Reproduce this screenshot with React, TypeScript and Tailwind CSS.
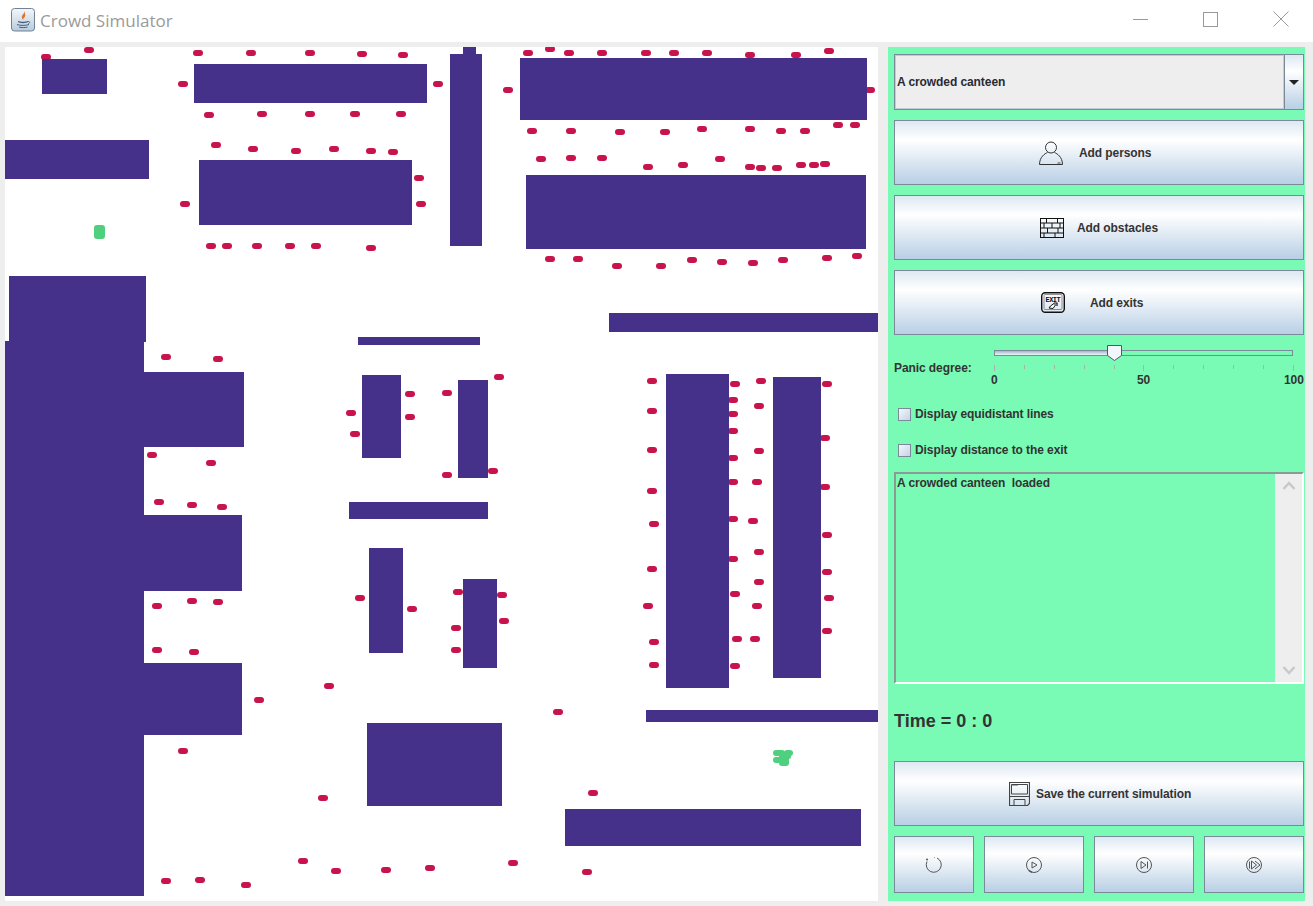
import type { ReactNode } from "react";

const obstacles = [
  [42, 59, 65, 35], [194, 64, 233, 39], [450, 54, 32, 192], [463, 47, 13, 7],
  [520, 58, 347, 62], [5, 140, 144, 39], [199, 160, 213, 65], [526, 175, 340, 74],
  [9, 276, 137, 66], [5, 341, 139, 555], [144, 372, 100, 75], [144, 515, 98, 76],
  [144, 663, 98, 72], [358, 337, 122, 8], [609, 313, 269, 19], [362, 375, 39, 83],
  [458, 380, 30, 98], [349, 502, 139, 17], [369, 548, 34, 105], [463, 579, 34, 89],
  [666, 374, 63, 314], [773, 377, 48, 301], [646, 710, 232, 12], [367, 723, 135, 83],
  [565, 809, 296, 37],
];

// centre of each person on the map
const persons = [
  [46, 57], [89, 50], [198, 53], [251, 53], [310, 53], [362, 54], [403, 55], [183, 84], [209, 115],
  [262, 114], [310, 114], [355, 114], [401, 114], [438, 84], [528, 53], [550, 49], [569, 53], [602, 53],
  [646, 53], [674, 53], [707, 53], [750, 55], [796, 55], [829, 51], [508, 90], [870, 90], [532, 131],
  [571, 131], [620, 132], [665, 132], [702, 129], [750, 129], [781, 131], [805, 131], [838, 125], [855, 125],
  [541, 159], [571, 158], [602, 158], [648, 167], [683, 165], [720, 159], [750, 167], [761, 168], [777, 168],
  [801, 165], [814, 165], [825, 164], [216, 145], [253, 149], [296, 151], [334, 149], [371, 151], [393, 152],
  [419, 178], [421, 204], [185, 204], [211, 246], [227, 246], [257, 246], [290, 246], [316, 246], [371, 248],
  [550, 259], [578, 259], [617, 266], [661, 266], [692, 260], [722, 262], [753, 263], [783, 260], [827, 258],
  [857, 256], [166, 357], [218, 359], [152, 455], [211, 463], [159, 502], [192, 505], [222, 507], [157, 606],
  [192, 601], [218, 602], [157, 650], [194, 652], [259, 700], [329, 686], [183, 751], [323, 798], [166, 881],
  [200, 880], [246, 885], [303, 861], [336, 871], [386, 870], [430, 868], [513, 863], [587, 872], [558, 712],
  [593, 793], [351, 413], [355, 434], [410, 394], [410, 417], [447, 393], [499, 377], [447, 475], [493, 471],
  [360, 598], [412, 609], [458, 592], [456, 628], [456, 650], [502, 595], [504, 621], [652, 381], [652, 411],
  [652, 450], [652, 491], [654, 524], [652, 569], [648, 606], [654, 642], [654, 665], [735, 384], [733, 400],
  [733, 414], [733, 431], [733, 458], [733, 482], [733, 519], [733, 559], [735, 594], [737, 639], [735, 666],
  [761, 381], [759, 406], [759, 451], [757, 482], [753, 521], [759, 552], [759, 582], [757, 606], [755, 639],
  [827, 384], [825, 438], [825, 487], [827, 535], [827, 572], [829, 598], [827, 631],
];

// exits, drawn as green blobs
const exits = [
  [94, 225, 11, 14], [773, 750, 12, 6], [784, 750, 9, 6], [786, 754, 5, 5], [773, 757, 9, 6], [779, 752, 10, 14],
];

const metal = "bg-[linear-gradient(to_bottom,#dde8f3_0%,#ffffff_30%,#b8cfe5_100%)] border border-[#7a8a99]";

function JavaIcon() {
  return (
    <svg width="25" height="24" viewBox="0 0 25 24">
      <defs>
        <linearGradient id="jv" x1="0" y1="0" x2="0" y2="1">
          <stop offset="0" stopColor="#f4f7fa" />
          <stop offset="1" stopColor="#b9cbdc" />
        </linearGradient>
      </defs>
      <rect x="0.5" y="0.5" width="23" height="22.5" rx="3" fill="url(#jv)" stroke="#6f8296" />
      <path d="M13 3c1 3-3 4-2 7 .3 1 1 1.500 1.500 2-1-2 3-3.500 1.500-6 0-1-.5-2-1-3z" fill="#e2722a" />
      <path d="M7 13c2 1 8 1 10 0v1c-1 1.500-9 1.500-10 0z" fill="#43617f" />
      <path d="M6 16.500c3 1.200 9 1.200 12 0M8 19c2.500.8 6 .8 8.500 0" fill="none" stroke="#43617f" strokeWidth="1" />
      <path d="M17 13.500c2-.5 2.500 1.500 0 2.500" fill="none" stroke="#43617f" strokeWidth="0.8" />
    </svg>
  );
}

function PersonIcon() {
  return (
    <svg width="24" height="24" viewBox="0 0 24 24" fill="none" stroke="#333" strokeWidth="1">
      <circle cx="12" cy="6.500" r="5.500" />
      <path d="M0.500 23.500C0.500 16 6 12.500 8.500 11.500M15.500 11.500C18 12.500 23.500 16 23.500 23.500H0.500" />
      <path d="M18.500 22h3" stroke="#999" strokeWidth="2" />
    </svg>
  );
}

function BrickIcon() {
  return (
    <svg width="24" height="20" viewBox="0 0 24 20" fill="none" stroke="#111" strokeWidth="1">
      <rect x="0.500" y="0.500" width="23" height="19" />
      <path d="M0 5h24M0 10h24M0 15h24M6.500 0v5M17.500 0v5M4 5v5M12 5v5M20 5v5M7.500 10v5M18 10v5M4 15v5M15 15v5" />
    </svg>
  );
}

function ExitIcon() {
  return (
    <svg width="24" height="21" viewBox="0 0 24 21" fill="none" stroke="#111">
      <rect x="0.700" y="0.700" width="22.600" height="19.600" rx="3.500" strokeWidth="1.400" />
      <rect x="3" y="2.500" width="18" height="15" rx="1" stroke="#777" strokeWidth="0.800" />
      <text x="12" y="9.500" textAnchor="middle" fontSize="7" fontWeight="700" fill="#111" stroke="none" fontFamily="Liberation Mono, monospace" textLength="15">EXIT</text>
      <path d="M8 16l1.500-2 3.500-2.500 1.500 1.500-2.500 3.500z" strokeWidth="1" fill="#fff" />
      <path d="M13 11h3v3" strokeWidth="1.200" />
    </svg>
  );
}

function SaveIcon() {
  return (
    <svg width="21" height="24" viewBox="0 0 21 24" fill="none" stroke="#444">
      <path d="M0.500 0.500h20v21l-2 2h-18z" strokeWidth="1.200" />
      <path d="M2.500 2.500h16v9.500h-16z" />
      <path d="M3 3.500h6" stroke="#aaa" />
      <path d="M0.500 14.500h20M5 23.500v-6h11v6" />
    </svg>
  );
}

function ReloadIcon() {
  return (
    <svg width="18" height="18" viewBox="0 0 18 18" fill="none" stroke="#555">
      <path d="M2 5.500A7.500 7.500 0 1 0 12 2M9 1.500h.5" />
      <circle cx="2" cy="3.500" r="1" fill="#555" stroke="none" />
    </svg>
  );
}

function PlayIcon() {
  return (
    <svg width="18" height="18" viewBox="0 0 18 18" fill="none" stroke="#555">
      <circle cx="9" cy="9" r="7.500" />
      <path d="M3.700 14.300a7.500 7.500 0 0 0 3.300 2" strokeWidth="1.500" />
      <path d="M7 6l5 3-5 3z" />
    </svg>
  );
}

function StepIcon() {
  return (
    <svg width="18" height="18" viewBox="0 0 18 18" fill="none" stroke="#555">
      <circle cx="9" cy="9" r="7.500" />
      <path d="M6 5.500l5 3.500-5 3.500zM12.500 5.500v7" />
    </svg>
  );
}

function FastIcon() {
  return (
    <svg width="18" height="18" viewBox="0 0 18 18" fill="none" stroke="#555">
      <circle cx="9" cy="9" r="7.500" />
      <path d="M4.500 5.500v7M6.500 5v8l5-4zM10 5l5 4-5 4" />
    </svg>
  );
}

function MetalButton({ pad, gap, icon, label }: { pad: string; gap: string; icon: ReactNode; label: string }) {
  return (
    <div className={`${metal} h-[65px] flex items-center ${pad} ${gap}`}>
      {icon}
      <span>{label}</span>
    </div>
  );
}

function SmallButton({ width, children }: { width: string; children: ReactNode }) {
  return <div className={`${metal} ${width} h-[57px] flex items-center justify-center`}>{children}</div>;
}

function Check({ label }: { label: string }) {
  return (
    <div className="flex items-center gap-1 pl-1 h-[14px]">
      <div className="w-[13px] h-[13px] border border-[#7a8a99] bg-[linear-gradient(135deg,#f4f7fb,#c4d4e6)]" />
      <span>{label}</span>
    </div>
  );
}

function Slider() {
  return (
    <div className="relative w-[300px] h-[43px]">
      <div className="mt-[5px] h-[6px] w-[299px] border border-[#7a8a99] flex">
        <div className="w-[113px] bg-[linear-gradient(to_bottom,#a3b8cc,#eef3f9)]" />
      </div>
      <svg className="absolute left-[113px] top-0" width="15" height="16" viewBox="0 0 15 16">
        <path d="M0.500 0.500h14v10l-7 5-7-5z" fill="#f3f7fb" stroke="#556" />
      </svg>
      <div className="mt-[9px] flex justify-between items-start w-[300px]">
        {Array.from({ length: 11 }).map((_, i) => (
          <div key={i} className={`w-px bg-[#a8b3ad] ${i % 5 === 0 ? "h-[6px]" : "h-[4px]"}`} />
        ))}
      </div>
      <div className="absolute left-[-3px] top-[29px] flex">
        <span className="w-[146px]">0</span>
        <span className="w-[147px]">50</span>
        <span>100</span>
      </div>
    </div>
  );
}

export default function App() {
  return (
    <div className="w-[1313px] h-[906px] bg-[#eeeeee] overflow-hidden font-['Liberation_Sans',Arial,sans-serif]">
      <div className="h-[42px] bg-white flex items-center justify-between">
        <div className="flex items-center gap-[4px] pl-[11px] pb-[2px]">
          <JavaIcon />
          <span className="text-[17px] text-[#9a9a9a] font-['Open_Sans',sans-serif] leading-none">Crowd Simulator</span>
        </div>
        <div className="flex items-center pr-[24px] gap-[55px] pb-[4px]">
          <div className="w-[15px] h-px bg-[#999]" />
          <div className="w-[15px] h-[15px] border border-[#999]" />
          <svg width="16" height="16" viewBox="0 0 16 16" stroke="#999" fill="none">
            <path d="M0.500 0.500l15 15M15.500 0.500l-15 15" />
          </svg>
        </div>
      </div>

      <div className="flex gap-[10px] pt-[5px] pl-[5px]">
        <div className="relative w-[873px] h-[854px] bg-white overflow-hidden">
          {persons.map(([x, y], i) => (
            <div
              key={i}
              className="absolute w-[10px] h-[6px] rounded-[3px] bg-[#c8134c]"
              style={{ left: x - 10, top: y - 50 }}
            />
          ))}
          {obstacles.map(([x, y, w, h], i) => (
            <div key={i} className="absolute bg-[#45308a]" style={{ left: x - 5, top: y - 47, width: w, height: h }} />
          ))}
          {exits.map(([x, y, w, h], i) => (
            <div
              key={i}
              className="absolute rounded-[3px] bg-[#4fd07f]"
              style={{ left: x - 5, top: y - 47, width: w, height: h }}
            />
          ))}
        </div>

        <div className="w-[417px] h-[854px] bg-[#7afbb5] pt-[7px] pl-[6px] pr-[1px] text-[12px] font-bold text-[#333333] leading-none tracking-[-0.08px] flex flex-col">
          <div className="h-[56px] border border-[#7a8a99] flex">
            <div className="flex-1 border border-[#c2ccd6] bg-[#eeeeee] flex items-center pl-[1px] text-[#2a2a33]">
              A crowded canteen
            </div>
            <div className="w-[19px] bg-[linear-gradient(to_bottom,#dde8f3_0%,#ffffff_30%,#b8cfe5_100%)] border-l border-[#7a8a99] flex items-center justify-center">
              <div className="w-0 h-0 border-l-[5px] border-r-[5px] border-t-[5px] border-l-transparent border-r-transparent border-t-[#222]" />
            </div>
          </div>

          <div className="mt-[10px] flex flex-col gap-[10px]">
            <MetalButton pad="pl-[144px]" gap="gap-[16px]" icon={<PersonIcon />} label="Add persons" />
            <MetalButton pad="pl-[145px]" gap="gap-[13px]" icon={<BrickIcon />} label="Add obstacles" />
            <MetalButton pad="pl-[146px]" gap="gap-[25px]" icon={<ExitIcon />} label="Add exits" />
          </div>

          <div className="mt-[10px] flex">
            <div className="w-[100px] pt-[17px]">Panic degree:</div>
            <Slider />
          </div>

          <div className="mt-[19px] flex flex-col gap-[22px]">
            <Check label="Display equidistant lines" />
            <Check label="Display distance to the exit" />
          </div>

          <div className="mt-[15px] h-[212px] border-2 border-t-[#8a9a94] border-l-[#8a9a94] border-r-white border-b-white flex">
            <div className="flex-1 pl-[1px] pt-[3px] whitespace-pre">A crowded canteen  loaded</div>
            <div className="w-[27px] bg-[#eeeeee] flex flex-col justify-between items-center py-[7px]">
              <svg width="14" height="10" viewBox="0 0 14 10" fill="none" stroke="#c8c8c8" strokeWidth="2.500">
                <path d="M1.500 8l5.500-6 5.500 6" />
              </svg>
              <svg width="14" height="10" viewBox="0 0 14 10" fill="none" stroke="#c8c8c8" strokeWidth="2.500">
                <path d="M1.500 2l5.500 6 5.500-6" />
              </svg>
            </div>
          </div>

          <div className="h-[77px] flex items-center text-[18px] pb-[3px] tracking-normal">Time = 0 : 0</div>

          <MetalButton pad="pl-[114px]" gap="gap-[6px]" icon={<SaveIcon />} label="Save the current simulation" />

          <div className="mt-[10px] flex gap-[10px]">
            <SmallButton width="w-[80px]"><ReloadIcon /></SmallButton>
            <SmallButton width="w-[100px]"><PlayIcon /></SmallButton>
            <SmallButton width="w-[100px]"><StepIcon /></SmallButton>
            <SmallButton width="w-[100px]"><FastIcon /></SmallButton>
          </div>
        </div>
      </div>
    </div>
  );
}
